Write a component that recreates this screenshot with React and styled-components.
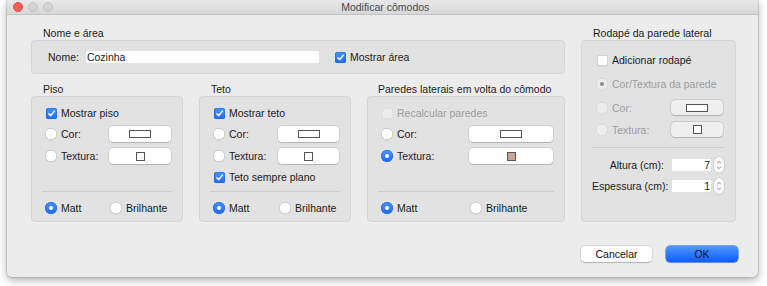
import React from 'react';
import styled, { createGlobalStyle } from 'styled-components';

const Global = createGlobalStyle`
  html, body { margin: 0; padding: 0; background: #ffffff; }
  body {
    font-family: "Liberation Sans", Arial, sans-serif;
    font-size: 10.5px;
    color: #1b1b1b;
  }
  * { box-sizing: border-box; }
`;

const Stage = styled.div`
  width: 767px;
  height: 286px;
  padding-left: 7px;
  overflow: hidden;
  background: #ffffff;
`;

const Window = styled.div`
  width: 751px;
  height: 277px;
  background: #ececec;
  border-radius: 0 0 5px 5px;
  box-shadow: 0 3px 9px rgba(0, 0, 0, 0.33), 0 0 0 1px rgba(0, 0, 0, 0.1);
  display: flex;
  flex-direction: column;
`;

const TitleBar = styled.div`
  flex: none;
  height: 15px;
  display: grid;
  grid-template-columns: 1fr auto 1fr;
  align-items: center;
  background: linear-gradient(#e8e8e8, #d7d7d7);
  border-bottom: 1px solid #c2c2c2;
  padding-left: 5.5px;
`;

const Lights = styled.div`
  display: flex;
  gap: 5px;
`;

const Light = styled.span`
  width: 10px;
  height: 10px;
  border-radius: 50%;
  background: ${p => (p.$red ? '#fc5f57' : '#d3d3d3')};
  border: 0.5px solid ${p => (p.$red ? '#de4741' : '#c2c2c2')};
`;

const Title = styled.div`
  color: #4b4b4b;
  font-size: 10.5px;
  line-height: 14px;
`;

const Body = styled.div`
  display: flex;
  gap: 16px;
  padding: 11px 0 0 24px;
`;

const LeftColumn = styled.div`
  width: 534px;
  display: flex;
  flex-direction: column;
`;

const RightColumn = styled.div`
  width: 155px;
  display: flex;
  flex-direction: column;
`;

const Group = styled.div`
  display: flex;
  flex-direction: column;
  margin-top: ${p => p.$mt || 0}px;
  flex: ${p => (p.$grow ? 1 : 'none')};
`;

const GroupTitle = styled.div`
  height: 14px;
  line-height: 14px;
  padding-left: ${p => p.$indent ?? 12}px;
  white-space: nowrap;
`;

const Panel = styled.div`
  flex: 1;
  background: #e2e2e2;
  border: 1px solid #d6d6d6;
  border-radius: 4px;
  display: flex;
  flex-direction: column;
  padding: ${p => p.$pad || '9px 11px 6px 14px'};
`;

const NamePanel = styled(Panel)`
  flex: none;
  height: 34px;
  flex-direction: row;
  align-items: center;
  padding: 0 16px;
`;

const TextField = styled.div`
  width: ${p => p.$w}px;
  height: 14px;
  margin-left: ${p => p.$ml || 0}px;
  background: #ffffff;
  box-shadow: inset 0 0 0 0.5px #c4c4c4;
  line-height: 14px;
  padding: 0 2px;
  text-align: ${p => p.$align || 'left'};
`;

const Triple = styled.div`
  display: grid;
  grid-template-columns: 152px 152px 198px;
  gap: 16px;
  margin-top: 8px;
`;

const Rows = styled.div`
  display: flex;
  flex-direction: column;
  gap: 6px;
  margin-bottom: 7px;
`;

const Row = styled.div`
  display: grid;
  grid-template-columns: ${p => p.$col}px 1fr;
  align-items: center;
  height: ${p => p.$h || 16}px;
  margin-top: ${p => p.$mt || 0}px;
`;

const SimpleRow = styled.div`
  display: flex;
  align-items: center;
  height: ${p => p.$h || 14}px;
  margin-top: ${p => p.$mt || 0}px;
`;

const Separator = styled.div`
  height: 1px;
  background: #cfcfcf;
  margin: ${p => (p.$auto ? 'auto' : `${p.$mt || 0}px`)} -1px 0 ${p => p.$ml ?? -4}px;
`;

const BottomRow = styled(Row)`
  margin-top: 9px;
  height: 14px;
`;

const Shift = styled.div`
  padding-left: 2px;
`;

const Option = styled.label`
  display: flex;
  align-items: center;
  gap: 4px;
  white-space: nowrap;
  color: ${p => (p.$disabled ? '#9c9c9c' : '#1b1b1b')};
`;

const Box = styled.span`
  flex: none;
  width: 11px;
  height: 11px;
  border-radius: 2.5px;
  display: inline-flex;
  align-items: center;
  justify-content: center;
  background: ${p =>
    p.$checked ? 'linear-gradient(#4a93ff, #1c6cf6)' : p.$disabled ? '#ececec' : '#ffffff'};
  box-shadow: ${p =>
    p.$checked
      ? 'inset 0 0 0 0.5px #1a62dc'
      : p.$disabled
      ? 'inset 0 0 0 0.5px #d2d2d2'
      : 'inset 0 0 0 0.5px #b0b0b0, 0 0.5px 0.5px rgba(0,0,0,0.12)'};
`;

const Round = styled.span`
  flex: none;
  width: 12px;
  height: 12px;
  margin-left: -1px;
  border-radius: 50%;
  display: inline-flex;
  align-items: center;
  justify-content: center;
  background: ${p =>
    p.$checked && !p.$disabled
      ? 'linear-gradient(#4a93ff, #1c6cf6)'
      : p.$disabled
      ? '#ececec'
      : '#ffffff'};
  box-shadow: ${p =>
    p.$checked && !p.$disabled
      ? 'inset 0 0 0 0.5px #1a62dc'
      : p.$disabled
      ? 'inset 0 0 0 0.5px #d0d0d0'
      : 'inset 0 0 0 0.5px #b0b0b0, 0 0.5px 0.5px rgba(0,0,0,0.12)'};
`;

const Dot = styled.span`
  width: 4px;
  height: 4px;
  border-radius: 50%;
  background: ${p => (p.$disabled ? '#8a8a8a' : '#ffffff')};
`;

const SwatchButton = styled.div`
  height: ${p => p.$h || 16}px;
  border-radius: 4px;
  background: ${p => (p.$disabled ? '#efefef' : '#ffffff')};
  box-shadow: 0 0 0 0.5px rgba(0, 0, 0, 0.16), 0 0.5px 1px rgba(0, 0, 0, 0.14);
  display: flex;
  align-items: center;
  justify-content: center;
`;

const ColorSwatch = styled.span`
  width: 22px;
  height: 8px;
  background: #ffffff;
  border: 1px solid #555555;
`;

const TextureSwatch = styled.span`
  width: 9px;
  height: 9px;
  background: ${p => p.$fill || '#ffffff'};
  border: 1px solid #555555;
`;

const SpinRow = styled.div`
  display: grid;
  grid-template-columns: 72px 41px 10px;
  column-gap: 7px;
  align-items: center;
  height: 15px;
  margin: ${p => p.$mt}px 0 0 -5px;
`;

const SpinLabel = styled.span`
  text-align: right;
  white-space: nowrap;
`;

const SpinField = styled.div`
  display: flex;
  gap: 2px;
  align-items: center;
`;

const Stepper = styled.div`
  width: 10px;
  height: 16px;
  margin-left: -5px;
  border-radius: 5px;
  background: #f8f8f8;
  box-shadow: 0 0 0 0.5px #bdbdbd;
  display: flex;
  align-items: center;
  justify-content: center;
`;

const Footer = styled.div`
  margin-top: auto;
  display: flex;
  justify-content: flex-end;
  gap: 14px;
  padding: 0 20px 15px 0;
`;

const Button = styled.div`
  width: ${p => p.$w}px;
  height: 16px;
  border-radius: 4px;
  display: flex;
  align-items: center;
  justify-content: center;
  color: #111111;
  background: ${p => (p.$primary ? 'linear-gradient(#4f97ff, #0d5dff)' : '#ffffff')};
  box-shadow: ${p =>
    p.$primary
      ? '0 0 0 0.5px #1f5fd8, 0 0.5px 1px rgba(0,0,0,0.2)'
      : '0 0 0 0.5px rgba(0,0,0,0.18), 0 0.5px 1px rgba(0,0,0,0.18)'};
`;

const Check = ({ checked, disabled }) => (
  <Box $checked={checked} $disabled={disabled}>
    {checked && (
      <svg width="9" height="9" viewBox="0 0 9 9">
        <path d="M1.8 4.7 L3.7 6.6 L7.3 2.2" fill="none" stroke="#ffffff" strokeWidth="1.5" strokeLinecap="round" strokeLinejoin="round" />
      </svg>
    )}
  </Box>
);

const Radio = ({ checked, disabled }) => (
  <Round $checked={checked} $disabled={disabled}>
    {checked && <Dot $disabled={disabled} />}
  </Round>
);

const CheckOption = ({ checked, disabled, children }) => (
  <Option $disabled={disabled}>
    <Check checked={checked} disabled={disabled} />
    {children}
  </Option>
);

const RadioOption = ({ checked, disabled, children }) => (
  <Option $disabled={disabled}>
    <Radio checked={checked} disabled={disabled} />
    {children}
  </Option>
);

const StepperIcon = () => (
  <Stepper>
    <svg width="6" height="12" viewBox="0 0 6 12">
      <path d="M1.2 4.2 L3 2.4 L4.8 4.2 M1.2 7.8 L3 9.6 L4.8 7.8" fill="none" stroke="#7a7a7a" strokeWidth="0.9" />
    </svg>
  </Stepper>
);

const SurfaceGroup = ({ title, col, first, firstDisabled, textureFill, textureChecked, extra, indent }) => (
  <Group>
    <GroupTitle $indent={indent}>{title}</GroupTitle>
    <Panel>
      <Rows>
        <SimpleRow>
          <CheckOption checked={!firstDisabled} disabled={firstDisabled}>{first}</CheckOption>
        </SimpleRow>
        <Row $col={col}>
          <RadioOption>Cor:</RadioOption>
          <SwatchButton><ColorSwatch /></SwatchButton>
        </Row>
        <Row $col={col}>
          <RadioOption checked={textureChecked}>Textura:</RadioOption>
          <SwatchButton><TextureSwatch $fill={textureFill} /></SwatchButton>
        </Row>
        {extra && (
          <SimpleRow>
            <CheckOption checked>{extra}</CheckOption>
          </SimpleRow>
        )}
      </Rows>
      <Separator $auto />
      <BottomRow $col={col}>
        <RadioOption checked>Matt</RadioOption>
        <Shift><RadioOption>Brilhante</RadioOption></Shift>
      </BottomRow>
    </Panel>
  </Group>
);

export default function App() {
  return (
    <>
      <Global />
      <Stage>
        <Window>
          <TitleBar>
            <Lights>
              <Light $red />
              <Light />
              <Light />
            </Lights>
            <Title>Modificar cômodos</Title>
            <span />
          </TitleBar>
          <Body>
            <LeftColumn>
              <Group>
                <GroupTitle>Nome e área</GroupTitle>
                <NamePanel>
                  <span>Nome:</span>
                  <TextField $w={235} $ml={6}>Cozinha</TextField>
                  <Shift style={{ paddingLeft: 15 }}>
                    <CheckOption checked>Mostrar área</CheckOption>
                  </Shift>
                </NamePanel>
              </Group>
              <Triple>
                <SurfaceGroup title="Piso" col={63} first="Mostrar piso" />
                <SurfaceGroup title="Teto" col={64} first="Mostrar teto" extra="Teto sempre plano" />
                <SurfaceGroup
                  title="Paredes laterais em volta do cômodo"
                  indent={11}
                  col={87}
                  first="Recalcular paredes"
                  firstDisabled
                  textureChecked
                  textureFill="#c9a694"
                />
              </Triple>
            </LeftColumn>
            <RightColumn>
              <Group $grow>
                <GroupTitle>Rodapé da parede lateral</GroupTitle>
                <Panel $pad="12px 12px 0 15px">
                  <SimpleRow>
                    <CheckOption>Adicionar rodapé</CheckOption>
                  </SimpleRow>
                  <SimpleRow $mt={10}>
                    <RadioOption checked disabled>Cor/Textura da parede</RadioOption>
                  </SimpleRow>
                  <Row $col={74} $h={15} $mt={9}>
                    <RadioOption disabled>Cor:</RadioOption>
                    <SwatchButton $h={15} $disabled><ColorSwatch /></SwatchButton>
                  </Row>
                  <Row $col={74} $h={15} $mt={7}>
                    <RadioOption disabled>Textura:</RadioOption>
                    <SwatchButton $h={15} $disabled><TextureSwatch /></SwatchButton>
                  </Row>
                  <Separator $mt={10} $ml={-6} />
                  <SpinRow $mt={9}>
                    <SpinLabel>Altura (cm):</SpinLabel>
                    <TextField $w={41} $align="right">7</TextField>
                    <StepperIcon />
                  </SpinRow>
                  <SpinRow $mt={6}>
                    <SpinLabel>Espessura (cm):</SpinLabel>
                    <TextField $w={41} $align="right">1</TextField>
                    <StepperIcon />
                  </SpinRow>
                </Panel>
              </Group>
            </RightColumn>
          </Body>
          <Footer>
            <Button $w={71}>Cancelar</Button>
            <Button $w={72} $primary>OK</Button>
          </Footer>
        </Window>
      </Stage>
    </>
  );
}
